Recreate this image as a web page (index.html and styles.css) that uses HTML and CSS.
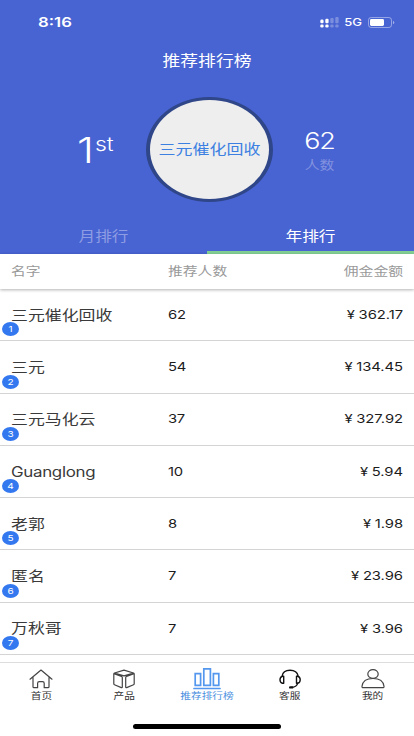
FILE: index.html
```html
<!DOCTYPE html>
<html lang="zh-CN">
<head>
<meta charset="utf-8">
<meta name="viewport" content="width=device-width, initial-scale=1">
<title>推荐排行榜</title>
<link rel="stylesheet" href="styles.css">
</head>
<body>
<div class="app">
  <header class="hero">
    <div class="status">
      <span class="t clock">8:16</span>
      <div class="status-right">
        <svg class="signal" width="19" height="11" viewBox="0 0 19 11" fill="#fff">
          <rect x="0.3" y="2.6" width="3.3" height="3.6" rx="1.3"/><rect x="5.3" y="1.8" width="3.3" height="4.4" rx="1.2"/>
          <rect x="0.3" y="7.6" width="3.3" height="2.8" rx="1.2"/><rect x="5.3" y="7.6" width="3.3" height="2.8" rx="1.2"/>
          <g opacity=".28"><rect x="10.3" y="1" width="3.3" height="5.2" rx="1"/><rect x="15.3" y="0" width="3.3" height="6.2" rx="1"/>
          <rect x="10.3" y="7.6" width="3.3" height="2.8" rx="1.2"/><rect x="15.3" y="7.6" width="3.3" height="2.8" rx="1.2"/></g>
        </svg>
        <span class="t net">5G</span>
        <svg class="battery" width="27" height="11" viewBox="0 0 27 11">
          <rect x=".5" y=".5" width="23" height="10" rx="2.6" fill="none" stroke="#fff" stroke-opacity=".42"/>
          <rect x="2" y="2" width="14" height="7" rx="1.4" fill="#fff"/>
          <path d="M25 4v3.2q1.3-.4 1.3-1.6T25 4z" fill="#fff" opacity=".5"/>
        </svg>
      </div>
    </div>
    <h1 class="title"><span class="t">推荐排行榜</span></h1>
    <div class="podium">
      <div class="place"><span class="t one">1</span><span class="t st">st</span></div>
      <div class="avatar"><span class="t">三元催化回收</span></div>
      <div class="total"><span class="t total-num">62</span><span class="t total-label">人数</span></div>
    </div>
    <nav class="tabs">
      <div class="tab"><span class="t">月排行</span></div>
      <div class="tab active"><span class="t">年排行</span></div>
    </nav>
  </header>
  <div class="head">
    <span class="t">名字</span><span class="t">推荐人数</span><span class="t">佣金金额</span>
  </div>
  <main class="list">
    <div class="row"><span class="t name">三元催化回收</span><span class="t num">62</span><span class="t money"><span class="yen">¥</span>362.17</span><span class="badge"><span class="t">1</span></span></div>
    <div class="row"><span class="t name">三元</span><span class="t num">54</span><span class="t money"><span class="yen">¥</span>134.45</span><span class="badge"><span class="t">2</span></span></div>
    <div class="row"><span class="t name">三元马化云</span><span class="t num">37</span><span class="t money"><span class="yen">¥</span>327.92</span><span class="badge"><span class="t">3</span></span></div>
    <div class="row"><span class="t name latin">Guanglong</span><span class="t num">10</span><span class="t money"><span class="yen">¥</span>5.94</span><span class="badge"><span class="t">4</span></span></div>
    <div class="row"><span class="t name">老郭</span><span class="t num">8</span><span class="t money"><span class="yen">¥</span>1.98</span><span class="badge"><span class="t">5</span></span></div>
    <div class="row"><span class="t name">匿名</span><span class="t num">7</span><span class="t money"><span class="yen">¥</span>23.96</span><span class="badge"><span class="t">6</span></span></div>
    <div class="row"><span class="t name">万秋哥</span><span class="t num">7</span><span class="t money"><span class="yen">¥</span>3.96</span><span class="badge"><span class="t">7</span></span></div>
  </main>
  <footer class="bar">
    <div class="items">
      <div class="item">
        <svg width="28" height="22" viewBox="0 0 28 22"><path d="M3 11.2 14 2l11 9.2M6 9.2v9.6q0 .9 1 .9h3.6v-4.5q0-1.6 1.7-1.6h3.2q1.7 0 1.7 1.6v4.5H21q1 0 1-.9V9.2"/></svg>
        <span class="t">首页</span>
      </div>
      <div class="item">
        <svg width="28" height="22" viewBox="0 0 28 22"><path d="M14 2.2 23.5 5q.7.3.7 1v9.7q0 .7-.7 1l-6.8 2.9q-1 .3-1-.7V9.5q0-.8.8-1.1L24 5.6M14 2.2 4.5 5q-.7.3-.7 1v9.7q0 .7.7 1l6.8 2.9q1 .3 1-.7V9.5q0-.8-.8-1.1L4 5.6M4.5 5 14 7.8 23.5 5"/></svg>
        <span class="t">产品</span>
      </div>
      <div class="item active">
        <svg width="28" height="22" viewBox="0 0 28 22"><path d="M2.2 5.7h5.4v11.6H2.2zM10.8.9h6.6v16.4h-6.6zM20.4 5.7h5.4v11.6h-5.4zM1 20.5h26"/></svg>
        <span class="t">推荐排行榜</span>
      </div>
      <div class="item service">
        <svg width="28" height="22" viewBox="0 0 28 22"><path d="M6 8.3Q7 2.3 14 2.3t8.3 6M7.7 8.2v7H6.5Q4 14.8 4 11.8T6.5 8.2zM20.5 8.2v7h1.2q2.5-.4 2.5-3.4t-2.5-3.6zM21.7 15q-.7 4-6.3 4.4"/><path d="M14.2 19.4h2" stroke-width="2.4"/></svg>
        <span class="t">客服</span>
      </div>
      <div class="item">
        <svg width="28" height="22" viewBox="0 0 28 22"><ellipse cx="14" cy="6" rx="5.2" ry="4.4"/><path d="M4.3 19.7q-1.5 0-1.3-1.4Q3.9 10.5 14 10.5t11 7.8q.2 1.4-1.3 1.4z"/></svg>
        <span class="t">我的</span>
      </div>
    </div>
    <div class="indicator"></div>
  </footer>
</div>
</body>
</html>
```
FILE: styles.css
```css
* { box-sizing: border-box; }
body {
  margin: 0;
  background: #fff;
  color: #333;
  font-family: Inter, "Noto Sans CJK SC", sans-serif;
  font-weight: 400;
}
.app { width: 414px; height: 736px; overflow: hidden; display: flex; flex-direction: column; }
.t { display: inline-block; transform: scaleY(.8214); white-space: nowrap; line-height: 1.2; }
svg { display: block; }

.hero { height: 254px; flex: none; background: #4863d2; color: #fff; display: flex; flex-direction: column; }
.status { height: 44px; display: flex; justify-content: space-between; align-items: center; padding: 0 19px 0 38px; }
.clock { font-size: 16.8px; font-weight: 600; padding-top: 1px; }
.status-right { display: flex; align-items: center; }
.net { font-size: 13px; font-weight: 500; margin: 0 6px 0 5px; padding-top: 1px; }
.title { margin: 0; height: 34px; display: flex; justify-content: center; align-items: center; font-size: 17.8px; font-weight: 400; }
.podium { height: 144px; display: grid; grid-template-columns: 146px 127px 141px; align-items: center; }
.place { display: flex; align-items: flex-start; padding: 0 0 0 77px; }
.one { font-size: 43px; font-weight: 300; letter-spacing: 0; line-height: 50px; }
.st { font-size: 23px; font-weight: 300; line-height: 24px; margin: 7px 0 0 1px; }
.avatar { width: 127px; height: 105px; margin-top: -2px; border: solid #2f4689; border-width: 3.5px 4px; border-radius: 50%; background: #eee; color: #3c80e2; font-size: 17px; display: flex; align-items: center; justify-content: center; }
.total { display: flex; flex-direction: column; align-items: center; padding: 3px 48px 0 0; }
.total-num { font-size: 27px; font-weight: 300; line-height: 28px; letter-spacing: -1.2px; }
.total-label { font-size: 14.8px; line-height: 20px; color: #8292df; font-weight: 400; }
.tabs { height: 32px; display: flex; }
.tab { flex: 1; display: flex; justify-content: center; align-items: center; padding-bottom: 1px; border-bottom: 3px solid transparent; font-size: 16.7px; color: #8e9de3; }
.tab.active { color: #fff; border-bottom-color: #82cf93; }

.head { height: 35px; flex: none; display: grid; grid-template-columns: 157px 1fr auto; align-items: center; padding: 2px 11px 0 11px; font-size: 14.8px; color: #999; box-shadow: 0 1px 3px rgba(0,0,0,.3); }
.head .t { justify-self: start; }
.list { flex: none; height: 373px; padding-bottom: 7px; }
.row { position: relative; height: 52.3px; display: grid; grid-template-columns: 157px 1fr auto; align-items: center; padding: 0 11px; border-bottom: 1px solid #d4d4d4; }
.row .t { justify-self: start; }
.name { font-size: 16.9px; color: #3a3a3a; }
.latin { letter-spacing: -.3px; padding-top: 2px; }
.num, .money { font-size: 14.8px; color: #1c1c1c; padding-top: 2px; }
.num { letter-spacing: -.3px; }
.yen { display: inline-block; width: 15.5px; text-align: center; }
.money { letter-spacing: -.05px; }
.badge { position: absolute; left: 2px; bottom: 4px; width: 17px; height: 14px; border-radius: 50%; background: #3478f0; color: #fff; font-size: 10px; display: flex; align-items: center; justify-content: center; }

.bar { flex: 1; border-top: 1px solid #ddd; background: #fff; display: flex; flex-direction: column; justify-content: space-between; align-items: center; padding: 5px 0 7px; }
.items { width: 100%; display: flex; }
.item { flex: 1; display: flex; flex-direction: column; align-items: center; font-size: 10.7px; color: #333; }
.item .t { line-height: 14px; }
.item svg { fill: none; stroke: #444; stroke-width: 1.2; stroke-linejoin: round; stroke-linecap: round; }
.item.service svg { stroke: #111; stroke-width: 1.4; }
.item.active { color: #4b8fe0; }
.item.active svg { stroke: #5497ee; stroke-width: 1.7; stroke-linejoin: miter; }
.indicator { width: 148px; height: 5px; border-radius: 3px; background: #000; }
```
